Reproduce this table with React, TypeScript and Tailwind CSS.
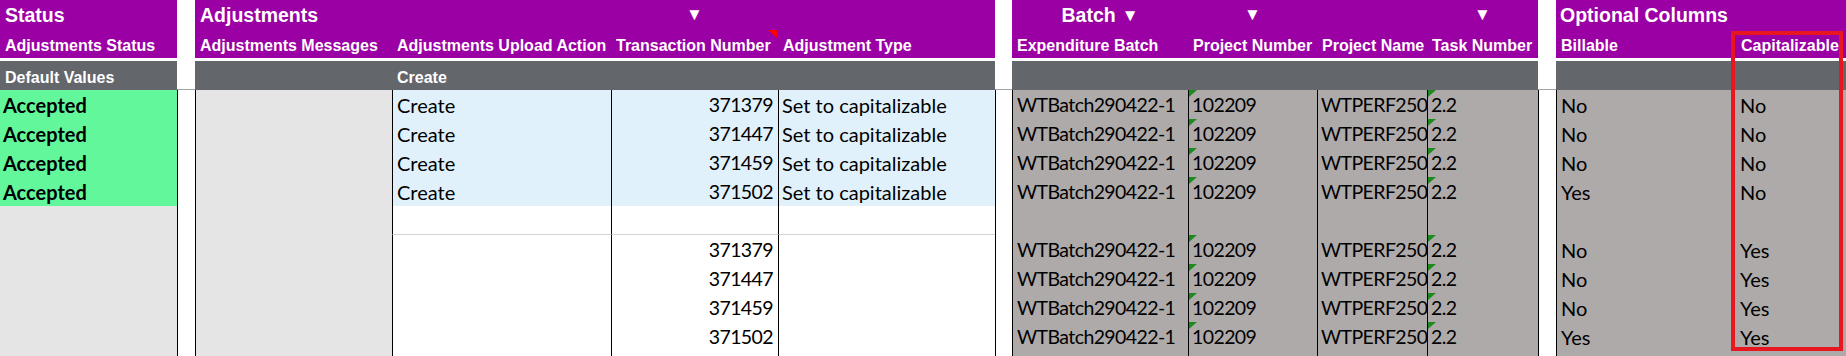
const COLS =
  'grid grid-cols-[177px_18px_197px_219px_167px_217px_17px_176px_129px_110px_111px_18px_180px_110px]';

const PURPLE = 'bg-[#9b00a5]';
const HEAD_GRAY = 'bg-[#63666a]';
const BATCH_GRAY = 'bg-[#aeaaaa]';
// Lato digits run wider than the sheet's font, so squeeze the numeric cells a bit
const NUM = 'text-[19.5px] tracking-[-0.6px]';

type Row = {
  accepted: boolean;
  upload?: string;
  trans?: string;
  type?: string;
  batch?: boolean;
  billable?: string;
  cap?: string;
  blue: boolean;
};

const rows: Row[] = [
  { accepted: true, upload: 'Create', trans: '371379', type: 'Set to capitalizable', batch: true, billable: 'No', cap: 'No', blue: true },
  { accepted: true, upload: 'Create', trans: '371447', type: 'Set to capitalizable', batch: true, billable: 'No', cap: 'No', blue: true },
  { accepted: true, upload: 'Create', trans: '371459', type: 'Set to capitalizable', batch: true, billable: 'No', cap: 'No', blue: true },
  { accepted: true, upload: 'Create', trans: '371502', type: 'Set to capitalizable', batch: true, billable: 'Yes', cap: 'No', blue: true },
  { accepted: false, blue: false },
  { accepted: false, trans: '371379', batch: true, billable: 'No', cap: 'Yes', blue: false },
  { accepted: false, trans: '371447', batch: true, billable: 'No', cap: 'Yes', blue: false },
  { accepted: false, trans: '371459', batch: true, billable: 'No', cap: 'Yes', blue: false },
  { accepted: false, trans: '371502', batch: true, billable: 'Yes', cap: 'Yes', blue: false },
  { accepted: false, blue: false },
];

function GreenMark() {
  return (
    <svg className="absolute left-0 top-0" width="8" height="7" viewBox="0 0 8 7">
      <polygon points="0,0 8,0 0,7" fill="#1d8a1d" />
    </svg>
  );
}

function HeadCell({ children, className = '' }: { children?: React.ReactNode; className?: string }) {
  return (
    <div className={`${PURPLE} relative flex items-center whitespace-nowrap pl-[5px] pt-[4px] text-white font-bold text-[16px] ${className}`}>
      {children}
    </div>
  );
}

function DataRow({ r }: { r: Row }) {
  const adjBg = r.blue ? 'bg-[#e0f1fb]' : 'bg-white border-b border-b-[#d4d4d4]';
  const cell = 'relative flex items-center whitespace-nowrap overflow-hidden border-l border-l-black';
  return (
    <div className={`${COLS} h-[29px] text-[20px] text-black`}>
      <div className={`flex items-center pl-[3px] font-bold ${r.accepted ? 'bg-[#62f79a]' : 'bg-[#e5e5e5]'}`}>
        {r.accepted ? 'Accepted' : ''}
      </div>
      <div className="bg-white border-l border-l-black" />
      <div className={`bg-[#e5e5e5] ${cell}`} />
      <div className={`${adjBg} ${cell} pl-[4px]`}>{r.upload}</div>
      <div className={`${adjBg} ${cell} ${NUM} justify-end pr-[5px]`}>{r.trans}</div>
      <div className={`${adjBg} ${cell} pl-[3px]`}>{r.type}</div>
      <div className="bg-white border-l border-l-black" />
      <div className={`${BATCH_GRAY} ${cell} ${NUM} pl-[4px]`}>{r.batch ? 'WTBatch290422-1' : ''}</div>
      <div className={`${BATCH_GRAY} ${cell} ${NUM} pl-[3px]`}>
        {r.batch && <GreenMark />}
        {r.batch ? '102209' : ''}
      </div>
      <div className={`${BATCH_GRAY} ${cell} ${NUM} pl-[3px]`}>{r.batch ? 'WTPERF250' : ''}</div>
      <div className={`${BATCH_GRAY} ${cell} ${NUM} pl-[3px]`}>
        {r.batch && <GreenMark />}
        {r.batch ? '2.2' : ''}
      </div>
      <div className="bg-white border-l border-l-black" />
      <div className={`${BATCH_GRAY} ${cell} pl-[4px]`}>{r.billable}</div>
      <div className={`${BATCH_GRAY} relative flex items-center pl-[4px]`}>{r.cap}</div>
    </div>
  );
}

export default function App() {
  return (
    <div className="relative w-[1846px] h-[356px] overflow-hidden bg-white font-['Lato',sans-serif]">
      <div className="font-['Liberation_Sans',Arial,sans-serif]">
        {/* group header */}
        <div className={`${COLS} h-[30px] text-white font-bold text-[19.5px]`}>
          <div className={`${PURPLE} flex items-center pl-[5px] pt-[1px]`}>Status</div>
          <div />
          <div className={`${PURPLE} col-span-2 flex items-center pl-[5px] pt-[1px]`}>Adjustments</div>
          <div className={`${PURPLE} flex items-center justify-center text-[17px]`}>▼</div>
          <div className={PURPLE} />
          <div />
          <div className={`${PURPLE} flex items-center justify-center pt-[1px]`}>
            Batch <span className="ml-[6px] text-[17px]">▼</span>
          </div>
          <div className={`${PURPLE} flex items-center justify-center text-[17px]`}>▼</div>
          <div className={PURPLE} />
          <div className={`${PURPLE} flex items-center justify-center text-[17px]`}>▼</div>
          <div />
          <div className={`${PURPLE} col-span-2 flex items-center pl-[4px] pt-[1px]`}>Optional Columns</div>
        </div>

        {/* column headers */}
        <div className={`${COLS} h-[27px]`}>
          <HeadCell>Adjustments Status</HeadCell>
          <div />
          <HeadCell>Adjustments Messages</HeadCell>
          <HeadCell>Adjustments Upload Action</HeadCell>
          <HeadCell>
            Transaction Number
            <svg className="absolute right-[1px] top-0" width="9" height="8" viewBox="0 0 9 8">
              <polygon points="0,0 9,0 9,8" fill="#ff0000" />
            </svg>
          </HeadCell>
          <HeadCell className="pl-[3px]">Adjustment Type</HeadCell>
          <div />
          <HeadCell>Expenditure Batch</HeadCell>
          <HeadCell>Project Number</HeadCell>
          <HeadCell className="pl-[4px]">Project Name</HeadCell>
          <HeadCell>Task Number</HeadCell>
          <div />
          <HeadCell>Billable</HeadCell>
          <HeadCell>Capitalizable</HeadCell>
        </div>

        <div className="h-[4px]" />

        {/* default values */}
        <div className={`${COLS} h-[28px] text-white font-bold text-[16px]`}>
          <div className={`${HEAD_GRAY} flex items-center pl-[5px] pt-[5px]`}>Default Values</div>
          <div />
          <div className={HEAD_GRAY} />
          <div className={`${HEAD_GRAY} flex items-center pl-[5px] pt-[5px]`}>Create</div>
          <div className={HEAD_GRAY} />
          <div className={HEAD_GRAY} />
          <div />
          <div className={HEAD_GRAY} />
          <div className={HEAD_GRAY} />
          <div className={HEAD_GRAY} />
          <div className={HEAD_GRAY} />
          <div />
          <div className={HEAD_GRAY} />
          <div className={HEAD_GRAY} />
        </div>
      </div>

      <div className="h-px bg-[#a3a3a3]" />

      {rows.map((r, i) => (
        <DataRow key={i} r={r} />
      ))}

      {/* highlight around the Capitalizable column */}
      <div className="absolute left-[1731px] top-[31px] w-[112px] h-[320px] border-4 border-[#e8161e]" />
    </div>
  );
}
